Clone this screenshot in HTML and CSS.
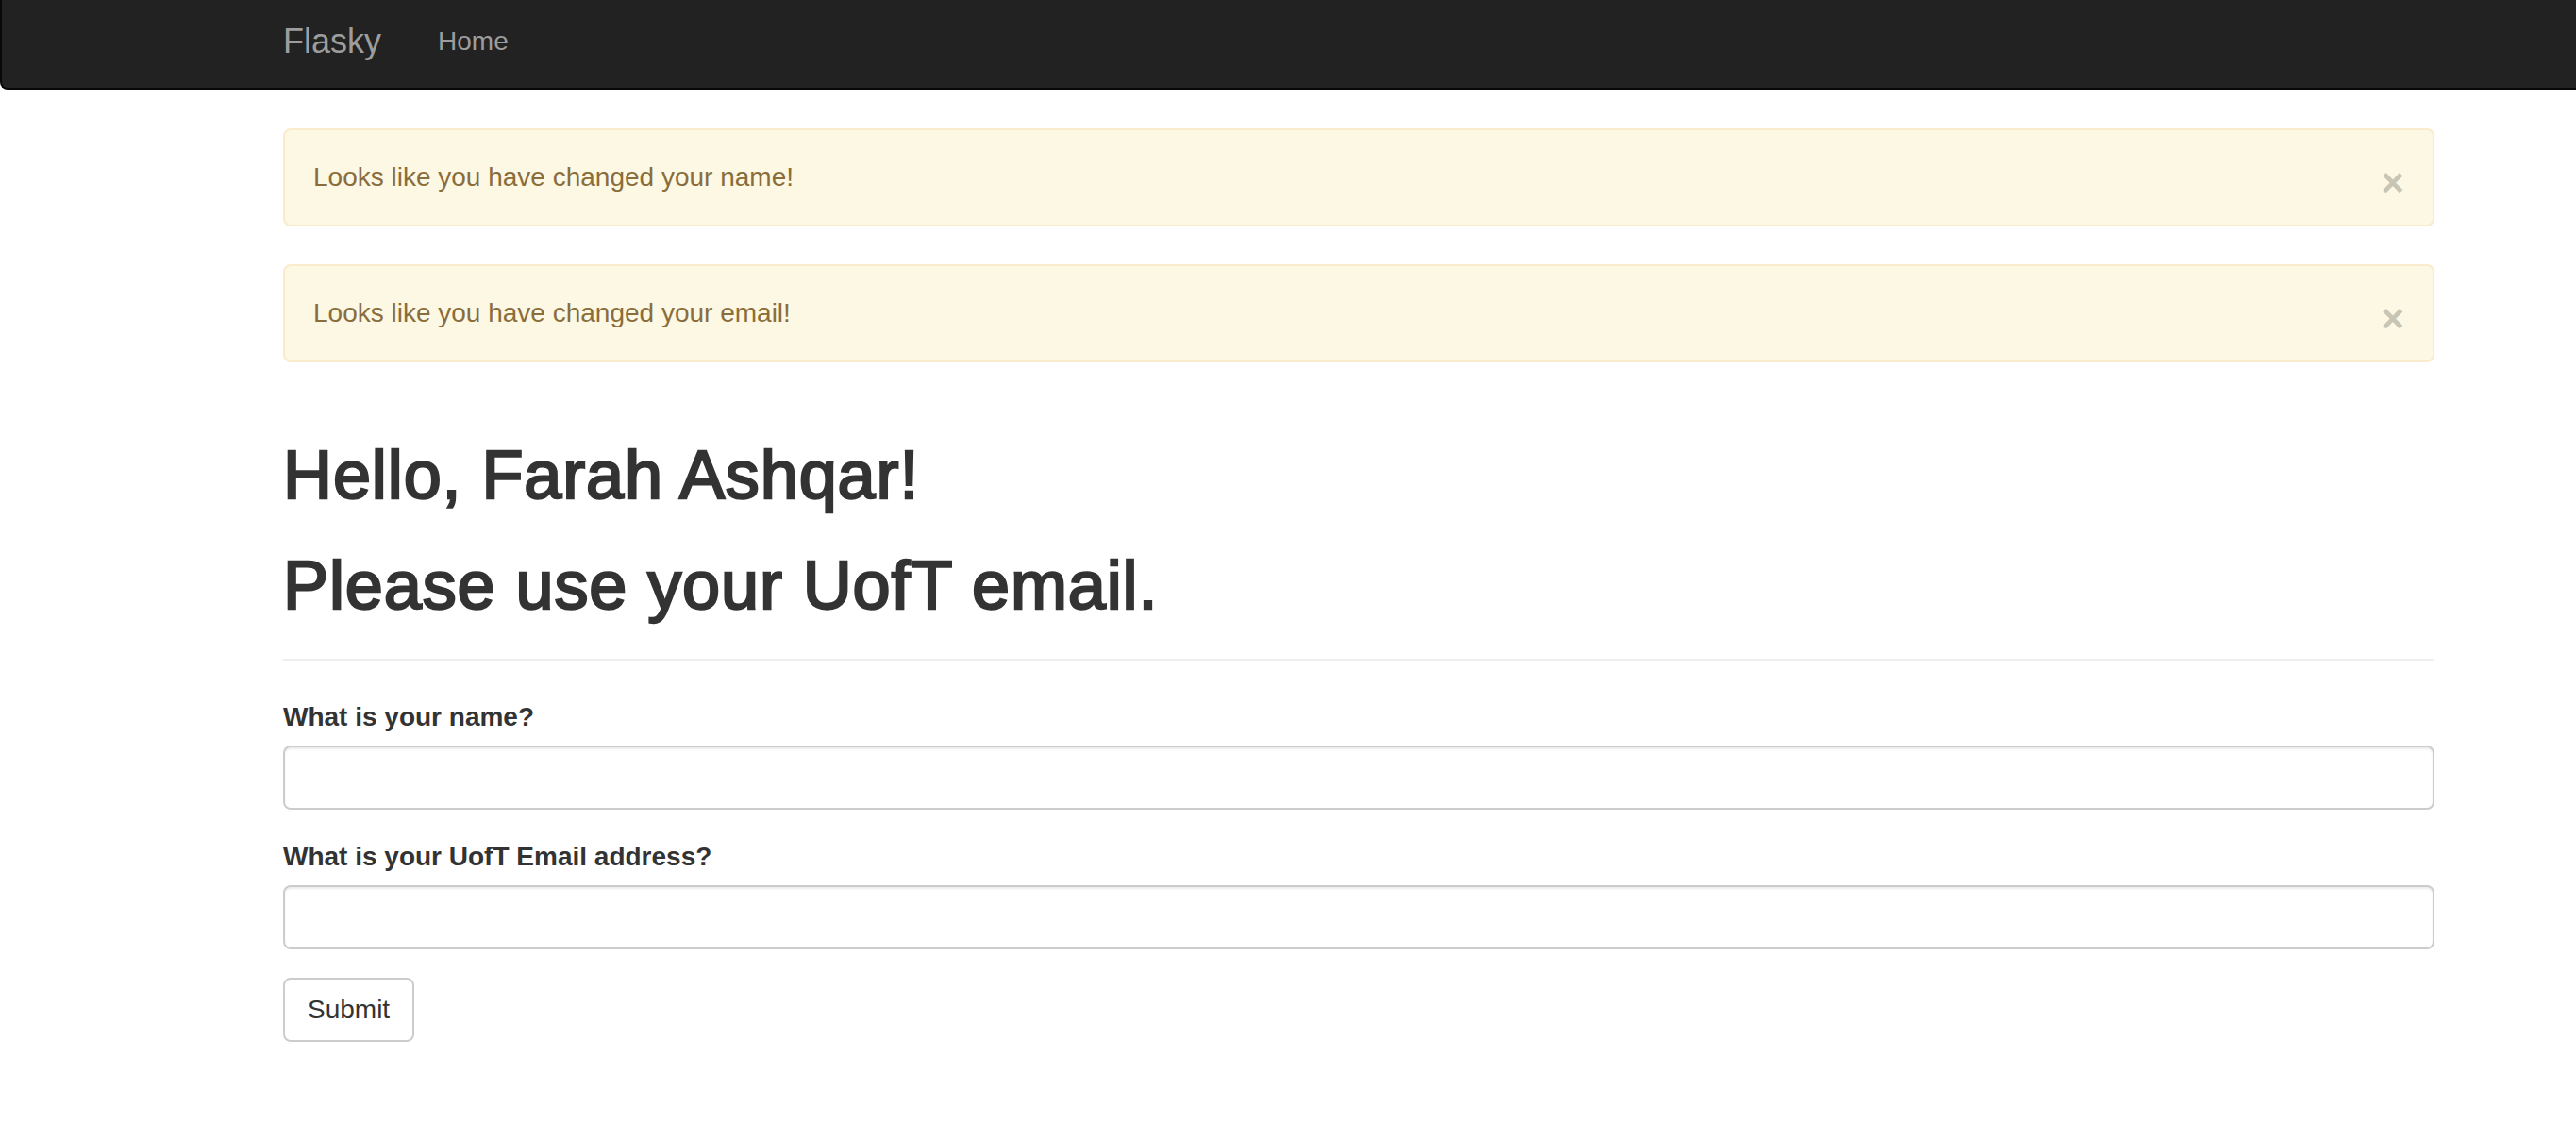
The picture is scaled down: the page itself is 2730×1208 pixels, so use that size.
FILE: index.html
```html
<!DOCTYPE html>
<html lang="en">
<head>
<meta charset="utf-8">
<title>Flasky</title>
<link rel="stylesheet" href="styles.css">
</head>
<body>
<nav class="navbar">
  <div class="nav-inner">
    <a class="brand" href="#">Flasky</a>
    <a class="nav-link" href="#">Home</a>
  </div>
</nav>
<main class="container">
  <div class="alert">
    <span class="alert-text">Looks like you have changed your name!</span>
    <button class="close" type="button">&times;</button>
  </div>
  <div class="alert">
    <span class="alert-text">Looks like you have changed your email!</span>
    <button class="close" type="button">&times;</button>
  </div>
  <div class="page-header">
    <h1>Hello, Farah Ashqar!</h1>
    <h1>Please use your UofT email.</h1>
  </div>
  <form class="form">
    <div class="form-group">
      <label class="label" for="name">What is your name?</label>
      <input class="form-control" id="name" type="text">
    </div>
    <div class="form-group">
      <label class="label" for="email">What is your UofT Email address?</label>
      <input class="form-control" id="email" type="text">
    </div>
    <button class="btn" type="button">Submit</button>
  </form>
</main>
</body>
</html>
```
FILE: styles.css
```css
html, body {
  margin: 0;
  padding: 0;
  background: #fff;
}
body {
  font-family: "Liberation Sans", Arial, Helvetica, sans-serif;
  font-size: 28px;
  line-height: 40px;
  color: #333;
}
.navbar {
  background: #222;
  border-left: 2px solid #080808;
  border-bottom: 2px solid #080808;
  border-bottom-left-radius: 8px;
  height: 93px;
  margin-bottom: 41px;
}
.nav-inner {
  height: 88px;
  display: flex;
  align-items: center;
  margin-left: 298px;
}
.brand {
  font-size: 36px;
  line-height: 40px;
  color: #9d9d9d;
  text-decoration: none;
}
.nav-link {
  margin-left: 60px;
  font-size: 28px;
  line-height: 40px;
  color: #9d9d9d;
  text-decoration: none;
}
.container {
  width: 2280px;
  margin-left: 300px;
}
.alert {
  display: flex;
  align-items: center;
  justify-content: space-between;
  height: 40px;
  padding: 30px;
  border: 2px solid #faebcc;
  border-radius: 8px;
  background: #fcf8e3;
  color: #8a6d3b;
  margin-bottom: 40px;
}
.close {
  font-family: "Liberation Sans", Arial, sans-serif;
  font-size: 42px;
  font-weight: bold;
  line-height: 40px;
  height: 40px;
  color: #000;
  opacity: 0.2;
  text-shadow: 0 2px 0 #fff;
  background: none;
  border: 0;
  padding: 0;
  margin-right: 0;
  position: relative;
  top: 6px;
}
.page-header {
  margin-top: 80px;
  padding-bottom: 18px;
  border-bottom: 2px solid #eee;
  margin-bottom: 40px;
}
h1 {
  font-size: 72px;
  line-height: 79px;
  font-weight: 500;
  margin: 38px 0 0 0;
  letter-spacing: 0.9px;
  -webkit-text-stroke: 2.4px #333;
}
.page-header h1:first-child {
  margin-top: 0;
}
.page-header h1:last-child {
  margin-bottom: 20px;
}
.form-group {
  margin-bottom: 30px;
}
.label {
  display: inline-block;
  font-weight: bold;
  margin-bottom: 10px;
}
.form-control {
  display: block;
  box-sizing: border-box;
  width: 100%;
  height: 68px;
  padding: 12px 24px;
  font-size: 28px;
  border: 2px solid #ccc;
  border-radius: 8px;
  box-shadow: inset 0 2px 2px rgba(0,0,0,0.075);
  background: #fff;
  margin: 0;
}
.btn {
  height: 68px;
  padding: 12px 24px;
  font-family: "Liberation Sans", Arial, sans-serif;
  font-size: 28px;
  line-height: 40px;
  color: #333;
  background: #fff;
  border: 2px solid #ccc;
  border-radius: 8px;
  margin: 0;
}
```
